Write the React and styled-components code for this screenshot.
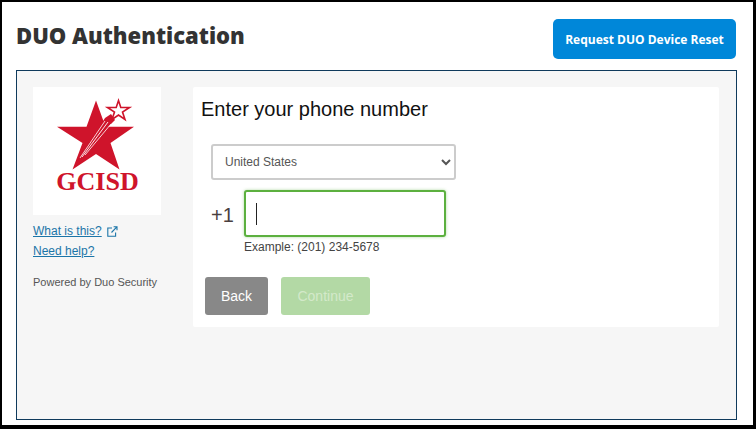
import React from "react";
import styled, { createGlobalStyle } from "styled-components";

const GlobalStyle = createGlobalStyle`
  html, body {
    margin: 0;
    padding: 0;
    background: #000;
  }
  * {
    box-sizing: border-box;
  }
`;

const App = () => {
  return (
    <>
      <GlobalStyle />
      <Page>
        <Header>
          <Title>DUO Authentication</Title>
          <ResetButton>Request DUO Device Reset</ResetButton>
        </Header>
        <Panel>
          <Sidebar>
            <LogoBox>
              <GcisdLogo />
            </LogoBox>
            <SideLink>
              <a href="#what">What is this?</a>
              <LinkIcon />
            </SideLink>
            <SideLink>
              <a href="#help">Need help?</a>
            </SideLink>
            <Powered>Powered by Duo Security</Powered>
          </Sidebar>
          <Content>
            <Heading>Enter your phone number</Heading>
            <CountrySelect defaultValue="US">
              <option value="US">United States</option>
            </CountrySelect>
            <PhoneRow>
              <Prefix>+1</Prefix>
              <PhoneField>
                <PhoneInput type="tel" readOnly />
                <Caret />
              </PhoneField>
            </PhoneRow>
            <Example>Example: (201) 234-5678</Example>
            <Actions>
              <ActionButton type="button">Back</ActionButton>
              <ActionButton type="button" $primary disabled>
                Continue
              </ActionButton>
            </Actions>
          </Content>
        </Panel>
      </Page>
    </>
  );
};

const LinkIcon = () => (
  <svg width="11" height="11" viewBox="0 0 11 11" fill="none" stroke="#1b75a8" strokeWidth="1.1">
    <path d="M5 2H0.8V10.2H8.6V6.5" />
    <path d="M4.5 6.5L9.6 1.2M6.6 0.8H10V4.2" />
  </svg>
);

const GcisdLogo = () => (
  <svg width="128" height="128" viewBox="0 0 128 128">
    <polygon
      fill="#cf142b"
      points="63,13.5 72.5,39.7 101,39.7 77.5,56 86.5,82.5 63,67 39.5,82.5 49.5,56 24,39.7 53.5,39.7"
    />
    <polygon fill="#cf142b" points="44,74 72,31 78,27 82,33 78,37" />
    <g stroke="#fff" fill="none">
      <line x1="47" y1="71" x2="72" y2="34" strokeWidth="0.8" />
      <line x1="49" y1="70" x2="75" y2="35" strokeWidth="0.9" />
      <line x1="52" y1="68" x2="78" y2="37" strokeWidth="0.8" />
    </g>
    <polygon
      fill="#fff"
      stroke="#cf142b"
      strokeWidth="1.6"
      points="85.5,13.5 87.8,20.5 96.5,20.5 89.5,25 92,32.5 85.5,28 79,32.5 81.5,25 74.5,20.5 83.2,20.5"
    />
    <LogoText x="64.5" y="103" textAnchor="middle">
      GCISD
    </LogoText>
  </svg>
);

export default App;

const Page = styled.div`
  width: 756px;
  height: 429px;
  overflow: hidden;
  border-style: solid;
  border-color: #000;
  border-width: 2px 3px 4px 2px;
  background: #fff;
  padding: 17px 16px 5px 14px;
  display: flex;
  flex-direction: column;
`;

const Header = styled.div`
  display: flex;
  justify-content: space-between;
  align-items: flex-start;
  height: 51px;
  padding-right: 1px;
`;

const Title = styled.h1`
  margin: 1px 0 0;
  font-family: "Open Sans", sans-serif;
  font-size: 22px;
  line-height: 30px;
  font-weight: 800;
  color: #333;
`;

const ResetButton = styled.button`
  width: 183px;
  height: 40px;
  border: 0;
  border-radius: 5px;
  background: #0087d9;
  color: #fff;
  font-family: "Open Sans", sans-serif;
  font-size: 12px;
  font-weight: 700;
  padding: 0;
`;

const Panel = styled.div`
  flex: 1;
  display: flex;
  border: 1px solid #0f3a5c;
  background: #f6f6f6;
  padding: 16px 16px;
  gap: 33px;
`;

const Sidebar = styled.div`
  width: 127px;
  flex: none;
  font-family: "Liberation Sans", Arial, sans-serif;
`;

const LogoBox = styled.div`
  width: 128px;
  height: 128px;
  background: #fff;
  margin-bottom: 6px;
  svg {
    display: block;
  }
`;

const LogoText = styled.text`
  font-family: "Liberation Serif", serif;
  font-size: 26px;
  font-weight: 700;
  fill: #cf142b;
`;

const SideLink = styled.div`
  display: flex;
  align-items: center;
  gap: 5px;
  height: 20px;
  font-size: 12px;
  color: #1b75a8;
  a {
    color: inherit;
    text-decoration: underline;
  }
`;

const Powered = styled.div`
  margin-top: 14px;
  font-size: 11px;
  line-height: 14px;
  color: #555;
`;

const Content = styled.div`
  width: 526px;
  height: 240px;
  background: #fff;
  border-radius: 2px;
  padding: 10px 12px;
  font-family: "Liberation Sans", Arial, sans-serif;
`;

const Heading = styled.h2`
  margin: 0 0 23px -4px;
  font-size: 20px;
  line-height: 24px;
  font-weight: 400;
  color: #111;
`;

const CountrySelect = styled.select`
  display: block;
  width: 245px;
  height: 36px;
  margin-left: 6px;
  padding: 0 0 0 8px;
  background: #fff;
  border: 2px solid #ccc;
  border-radius: 3px;
  font-family: inherit;
  font-size: 12px;
  color: #555;
`;

const PhoneRow = styled.div`
  display: flex;
  align-items: center;
  gap: 10px;
  margin: 10px 0 0 6px;
`;

const Prefix = styled.span`
  font-size: 20px;
  padding-top: 3px;
  color: #4a3f3f;
`;

const PhoneField = styled.div`
  position: relative;
  width: 202px;
  height: 47px;
`;

const PhoneInput = styled.input`
  display: block;
  width: 100%;
  height: 100%;
  border: 2px solid #5cb03f;
  border-radius: 3px;
  box-shadow: 0 0 3px rgba(92, 176, 63, 0.5);
  outline: none;
`;

const Caret = styled.span`
  position: absolute;
  left: 12px;
  top: 13px;
  width: 1px;
  height: 22px;
  background: #222;
`;

const Example = styled.div`
  margin: 3px 0 0 39px;
  font-size: 12px;
  line-height: 14px;
  color: #444;
`;

const Actions = styled.div`
  display: flex;
  gap: 13px;
  margin-top: 23px;
`;

const ActionButton = styled.button`
  height: 38px;
  width: ${(p) => (p.$primary ? "89px" : "63px")};
  border: 0;
  border-radius: 3px;
  padding: 0;
  font-family: inherit;
  font-size: 14px;
  background: ${(p) => (p.$primary ? "#b3d9a5" : "#888")};
  color: ${(p) => (p.$primary ? "#d3e9ca" : "#fff")};
`;
